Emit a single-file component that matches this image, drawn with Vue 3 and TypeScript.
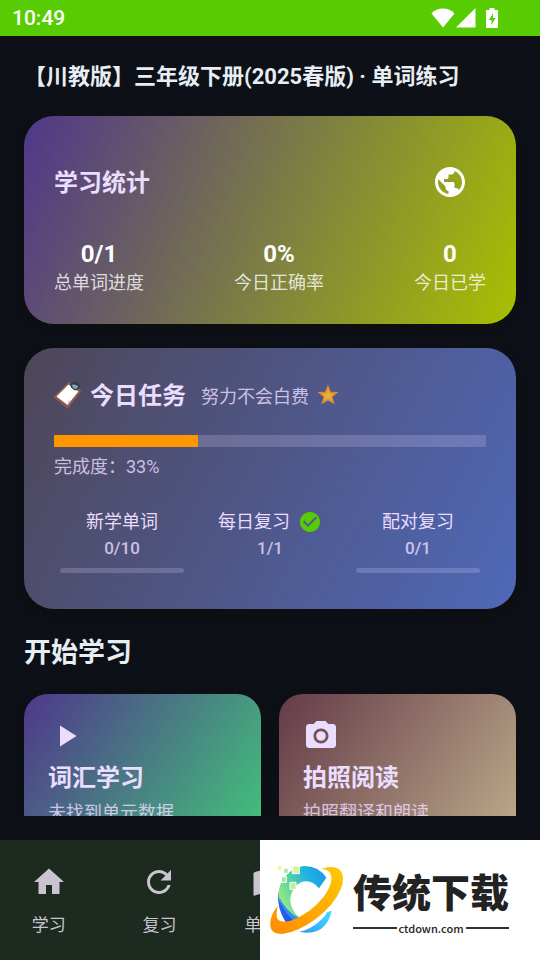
<script setup lang="ts">
import { computed } from 'vue'

interface Stat {
  value: string
  label: string
}

interface Task {
  label: string
  done: number
  total: number
}

interface Lesson {
  title: string
  hint: string
  tone: string
  icon: string
}

interface Tab {
  label: string
  icon: string
}

const stats: Stat[] = [
  { value: '0/1', label: '总单词进度' },
  { value: '0%', label: '今日正确率' },
  { value: '0', label: '今日已学' },
]

const tasks: Task[] = [
  { label: '新学单词', done: 0, total: 10 },
  { label: '每日复习', done: 1, total: 1 },
  { label: '配对复习', done: 0, total: 1 },
]

const completion = computed(
  () => (100 * tasks.filter((t) => t.done >= t.total).length) / tasks.length,
)

const lessons: Lesson[] = [
  { title: '词汇学习', hint: '未找到单元数据', tone: 'green', icon: 'M8 5v14l11-7z' },
  {
    title: '拍照阅读',
    hint: '拍照翻译和朗读',
    tone: 'rose',
    icon: 'M12 8.8a3.2 3.2 0 1 0 0 6.4 3.2 3.2 0 0 0 0-6.4zM9 2L7.17 4H4c-1.1 0-2 .9-2 2v12c0 1.1.9 2 2 2h16c1.1 0 2-.9 2-2V6c0-1.1-.9-2-2-2h-3.17L15 2H9zm3 15c-2.76 0-5-2.24-5-5s2.24-5 5-5 5 2.24 5 5-2.24 5-5 5z',
  },
]

const tabs: Tab[] = [
  { label: '学习', icon: 'M10 20v-6h4v6h5v-8h3L12 3 2 12h3v8z' },
  {
    label: '复习',
    icon: 'M17.65 6.35C16.2 4.9 14.21 4 12 4c-4.42 0-7.99 3.58-7.99 8s3.57 8 7.99 8c3.73 0 6.84-2.55 7.73-6h-2.08c-.82 2.33-3.04 4-5.65 4-3.31 0-6-2.69-6-6s2.69-6 6-6c1.66 0 3.14.69 4.22 1.78L13 11h7V4l-2.35 2.35z',
  },
  {
    label: '单词本',
    icon: 'M21 5c-1.11-.35-2.33-.5-3.5-.5-1.95 0-4.05.4-5.5 1.5-1.45-1.1-3.55-1.5-5.5-1.5S2.45 4.9 1 6v14.65c0 .25.25.5.5.5.1 0 .15-.05.25-.05C3.1 20.45 5.05 20 6.5 20c1.95 0 4.05.4 5.5 1.5 1.35-.85 3.8-1.5 5.5-1.5 1.65 0 3.35.3 4.75 1.05.1.05.15.05.25.05.25 0 .5-.25.5-.5V6c-.6-.45-1.25-.75-2-1z',
  },
]
</script>

<template>
  <div class="screen">
    <div class="status">
      <span>10:49</span>
      <div class="status-icons">
        <svg class="wifi" viewBox="0 0 24 20"><path d="M12 19.500L.5 5.500C3.400 2.300 7.400.5 12 .5s8.600 1.800 11.500 5z" /></svg>
        <svg class="signal" viewBox="0 0 20 20"><path d="M0 19.500H19.500V0z" /></svg>
        <svg class="battery" viewBox="0 0 12 20">
          <path fill-rule="evenodd" d="M3.500 0h5v2H11q1 0 1 1v16q0 1-1 1H1q-1 0-1-1V3q0-1 1-1h2.500zM7 5.500L2.800 12H5.500v5L9.500 10H7z" />
        </svg>
      </div>
    </div>

    <h1 class="page-title">【川教版】三年级下册(2025春版) · 单词练习</h1>

    <main class="content">
      <section class="card stats-card">
        <div class="stats-head">
          <h2>学习统计</h2>
          <button class="globe" aria-label="语言">
            <svg viewBox="0 0 24 24">
              <path d="M12 2C6.480 2 2 6.480 2 12s4.480 10 10 10 10-4.480 10-10S17.520 2 12 2zm-1 17.930c-3.950-.49-7-3.850-7-7.930 0-.62.08-1.210.21-1.790L9 15v1c0 1.100.9 2 2 2v1.930zm6.900-2.540c-.26-.81-1-1.390-1.900-1.390h-1v-3c0-.55-.45-1-1-1H8v-2h2c.55 0 1-.45 1-1V7h2c1.100 0 2-.9 2-2v-.41c2.930 1.190 5 4.060 5 7.410 0 2.080-.8 3.970-2.100 5.390z" />
            </svg>
          </button>
        </div>
        <div class="stats">
          <div v-for="s in stats" :key="s.label" class="stat">
            <strong>{{ s.value }}</strong>
            <span>{{ s.label }}</span>
          </div>
        </div>
      </section>

      <section class="card tasks-card">
        <div class="tasks-head">
          <svg class="clipboard" viewBox="0 0 28 28">
            <path d="M15 1L27 9.500 13.500 27.500 0 16z" fill="#8a5a4c" stroke="#8a5a4c" stroke-linejoin="round" />
            <path d="M14.500 3.500L24.500 10.500 13.500 24 2.500 15.500z" fill="#fff" />
            <path d="M13.500 24l4-5-3.500 1z" fill="#cfc9cc" />
            <path d="M16 3q2-2.500 5-2l4 1.500q1.500 3-.5 5.500-2 2-4.500 1l-3-2.500z" fill="#2f4148" />
            <path d="M17.500 4q3-1.500 6.500 1-.5 3-3 3-2-1-3.500-4z" fill="#7fa9b5" />
          </svg>
          <h2>今日任务</h2>
          <span class="cheer">努力不会白费</span>
          <svg class="star" viewBox="0 0 22 22">
            <path d="M11 .5l2.800 7.300 7.700.3-6 4.900 2.200 7.500L11 16.400 4.300 20.500 6.500 13 .5 8.100l7.700-.3z" fill="#df8a35" />
            <path d="M11 5l1.900 4.400 4.400.3-3.400 2.900 1.200 4.300L11 14.500l-4.100 2.400 1.200-4.300-3.400-2.900 4.400-.3z" fill="#e6b22e" />
          </svg>
        </div>
        <div class="meter" role="progressbar" aria-label="完成度" :aria-valuenow="Math.round(completion)">
          <div class="meter-fill" :style="{ width: completion + '%' }"></div>
        </div>
        <p class="completion">完成度：{{ Math.round(completion) }}%</p>
        <div class="tasks">
          <div v-for="t in tasks" :key="t.label" class="task">
            <div class="task-name">
              <span>{{ t.label }}</span>
              <svg v-if="t.done >= t.total" viewBox="0 0 24 24">
                <path d="M12 2C6.480 2 2 6.480 2 12s4.480 10 10 10 10-4.480 10-10S17.520 2 12 2zm-2 15l-5-5 1.410-1.410L10 14.170l7.590-7.590L19 8l-9 9z" />
              </svg>
            </div>
            <span class="task-count">{{ t.done }}/{{ t.total }}</span>
            <div v-if="t.done < t.total" class="task-bar"></div>
          </div>
        </div>
      </section>

      <h2 class="section-title">开始学习</h2>

      <div class="lessons">
        <button v-for="l in lessons" :key="l.title" class="lesson" :class="l.tone">
          <svg viewBox="0 0 24 24"><path fill-rule="evenodd" :d="l.icon" /></svg>
          <strong>{{ l.title }}</strong>
          <span>{{ l.hint }}</span>
        </button>
      </div>
    </main>

    <nav class="tabs">
      <a v-for="t in tabs" :key="t.label" href="#">
        <svg viewBox="0 0 24 24"><path :d="t.icon" /></svg>
        <span>{{ t.label }}</span>
      </a>
    </nav>

    <aside class="brand">
      <svg class="brand-mark" viewBox="30 105 222 210">
        <defs>
          <linearGradient id="cArc" x1="0" y1="0.700" x2="1" y2="0.200">
            <stop offset="0" stop-color="#a6ee7c" />
            <stop offset="0.350" stop-color="#57d3a4" />
            <stop offset="0.650" stop-color="#22b5dc" />
            <stop offset="1" stop-color="#189be8" />
          </linearGradient>
          <linearGradient id="cLeft" x1="0" y1="0" x2="1" y2="1">
            <stop offset="0" stop-color="#2b6cf0" />
            <stop offset="1" stop-color="#1f4de0" />
          </linearGradient>
          <linearGradient id="cTail" x1="0" y1="1" x2="1" y2="0">
            <stop offset="0" stop-color="#2f9bf5" />
            <stop offset="1" stop-color="#45e0ff" />
          </linearGradient>
          <linearGradient id="cRing" x1="0" y1="1" x2="1" y2="0">
            <stop offset="0" stop-color="#ff8a00" />
            <stop offset="1" stop-color="#ffca05" />
          </linearGradient>
        </defs>
        <path d="M118 305Q135 303 160 288Q190 268 202 246L215 242Q209 276 184 296Q155 314 118 305z" fill="url(#cTail)" />
        <path d="M54 185Q50 235 78 278Q104 278 120 264Q75 235 54 185z" fill="url(#cLeft)" />
        <path d="M199 143Q176 108 132 108Q92 112 68 150Q52 178 56 206Q72 246 118 266Q88 232 91 204Q96 170 124 156Q154 146 177 175z" fill="url(#cArc)" />
        <path d="M56 198Q64 238 98 270L116 265Q76 242 56 198z" fill="#2f8df3" />
        <path
          d="M184 116Q222 104 240 120Q257 140 242 178Q222 226 168 266Q114 306 66 312Q34 312 31 288Q29 255 54 227Q46 252 53 268Q62 280 92 272Q150 252 190 202Q222 158 212 132Q206 118 184 116z"
          fill="url(#cRing)"
        />
        <g stroke="#fff" stroke-width="3">
          <path d="M97 108h21v23h-21z" fill="#dcf29a" />
          <path d="M90 157h18v21h-18z" fill="#b9ee9a" />
          <path d="M64 140h15v17h-15z" fill="#a9e6a4" />
          <path d="M71 115h14v15h-14z" fill="#aee8a0" />
          <path d="M52 106h13v14h-13z" fill="#e6f59c" />
        </g>
      </svg>
      <div class="brand-text">
        <strong>传统下载</strong>
        <div class="brand-site"><span>ctdown.com</span></div>
      </div>
    </aside>
  </div>
</template>

<style>
body {
  margin: 0;
  background: #0d1017;
}
</style>

<style scoped>
.screen {
  position: relative;
  display: flex;
  flex-direction: column;
  height: 100vh;
  background: #0d1017;
  font-family: Roboto, 'Noto Sans CJK SC', sans-serif;
  color: #eaddff;
}

h1,
h2,
p {
  margin: 0;
}

svg {
  display: block;
  flex: none;
  fill: currentColor;
}

button {
  border: 0;
  margin: 0;
  font: inherit;
  color: inherit;
  background: none;
}

.status {
  display: flex;
  flex: none;
  align-items: center;
  justify-content: space-between;
  height: 36px;
  padding: 0 42px 0 12px;
  background: #58cc02;
  color: #fff;
  font-size: 21px;
  font-weight: 500;
}

.status-icons {
  display: flex;
  align-items: center;
}

.wifi {
  width: 24px;
  height: 20px;
}

.signal {
  width: 20px;
  height: 20px;
  margin: 0 10px 0 1px;
}

.battery {
  width: 12px;
  height: 20px;
}

.page-title {
  flex: none;
  padding: 2px 24px 0;
  line-height: 78px;
  font-size: 22px;
  font-weight: 700;
  color: #e6edf3;
}

.content {
  flex: 1;
  min-height: 0;
  overflow-y: auto;
  scrollbar-width: none;
  padding: 0 24px;
}

.card {
  border-radius: 30px;
  box-shadow: 0 3px 9px rgba(14, 16, 12, 0.9);
}

.card h2 {
  padding-top: 2px;
  font-size: 24px;
  line-height: 36px;
  font-weight: 700;
}

.stats-card {
  padding: 30px 30px 26px;
  background: linear-gradient(113deg, #4f378b, #a8c000);
}

.stats-head {
  display: flex;
  align-items: center;
  justify-content: space-between;
}

.globe {
  display: grid;
  place-items: center;
  width: 72px;
  height: 72px;
  padding: 0;
  color: #fff;
}

.globe svg {
  width: 36px;
  height: 36px;
}

.stats {
  display: flex;
  justify-content: space-between;
  margin-top: 22px;
}

.stat {
  display: flex;
  flex-direction: column;
  align-items: center;
  line-height: 30px;
  font-size: 18px;
  color: rgba(255, 255, 255, 0.8);
}

.stat strong {
  font-size: 24px;
  line-height: 28px;
  color: #fff;
}

.tasks-card {
  margin-top: 24px;
  padding: 28px 30px 36px;
  background: linear-gradient(118deg, #4e4658, #4f68b8);
}

.tasks-head {
  display: flex;
  align-items: center;
}

.clipboard {
  width: 28px;
  height: 28px;
  margin-right: 8px;
}

.cheer {
  margin: 0 8px 0 15px;
  font-size: 18px;
  opacity: 0.8;
}

.star {
  width: 22px;
  height: 22px;
}

.meter {
  height: 12px;
  margin-top: 21px;
  background: rgba(234, 221, 255, 0.2);
}

.meter-fill {
  height: 100%;
  background: #ff9600;
}

.completion {
  margin-top: 6px;
  font-size: 18px;
  line-height: 28px;
  opacity: 0.8;
}

.tasks {
  display: grid;
  grid-template-columns: repeat(3, 1fr);
  gap: 12px;
  margin-top: 27px;
}

.task {
  display: flex;
  flex-direction: column;
  align-items: center;
  padding: 0 6px;
}

.task-name {
  display: flex;
  align-items: center;
  gap: 8px;
  font-size: 18px;
  line-height: 28px;
}

.task-name svg {
  width: 24px;
  height: 24px;
  color: #58cc02;
}

.task-count {
  font-size: 17px;
  line-height: 24px;
  font-weight: 500;
  opacity: 0.8;
}

.task-bar {
  align-self: stretch;
  height: 5px;
  margin-top: 8px;
  border-radius: 3px;
  background: rgba(234, 221, 255, 0.2);
}

.section-title {
  margin: 24px 0 21px;
  font-size: 27px;
  line-height: 40px;
  font-weight: 700;
  color: #e6edf3;
}

.lessons {
  display: grid;
  grid-template-columns: 1fr 1fr;
  gap: 18px;
}

.lesson {
  display: flex;
  flex-direction: column;
  align-items: flex-start;
  padding: 24px;
  border-radius: 24px;
  box-shadow: 0 2px 6px rgba(14, 16, 12, 0.9);
  text-align: left;
}

.lesson.green {
  background: linear-gradient(123deg, #4f378b, #42c77a);
}

.lesson.rose {
  background: linear-gradient(123deg, #633b48, #c0ad8c);
}

.lesson svg {
  width: 36px;
  height: 36px;
}

.lesson strong {
  margin-top: 6px;
  font-size: 24px;
  line-height: 36px;
}

.lesson span {
  font-size: 18px;
  line-height: 34px;
  opacity: 0.8;
}

.tabs {
  display: grid;
  flex: none;
  grid-template-columns: repeat(5, 1fr);
  column-gap: 13px;
  height: 96px;
  margin-top: 24px;
  padding-top: 24px;
  background: #1c2a20;
}

.tabs a {
  display: flex;
  flex-direction: column;
  align-items: center;
  color: #cac4d0;
  font-size: 17px;
  line-height: 26px;
  text-decoration: none;
}

.tabs svg {
  width: 36px;
  height: 36px;
  margin-bottom: 12px;
}

/* Sponsor banner pinned over the right end of the tab bar */
.brand {
  position: absolute;
  right: 0;
  bottom: 0;
  display: flex;
  align-items: center;
  gap: 9px;
  box-sizing: border-box;
  width: 280px;
  height: 120px;
  padding-left: 10px;
  background: #fff;
  color: #222;
}

.brand-mark {
  width: 74px;
  height: 70px;
}

.brand-text {
  display: flex;
  flex-direction: column;
  font-family: 'Noto Sans CJK SC', sans-serif;
}

.brand-text strong {
  font-size: 39px;
  line-height: 56px;
  font-weight: 900;
}

.brand-site {
  display: flex;
  align-items: center;
  gap: 2px;
  font-size: 11px;
  line-height: 20px;
  font-weight: 500;
}

.brand-site::before,
.brand-site::after {
  content: '';
  flex: 1;
  height: 2px;
  background: #333;
}
</style>
